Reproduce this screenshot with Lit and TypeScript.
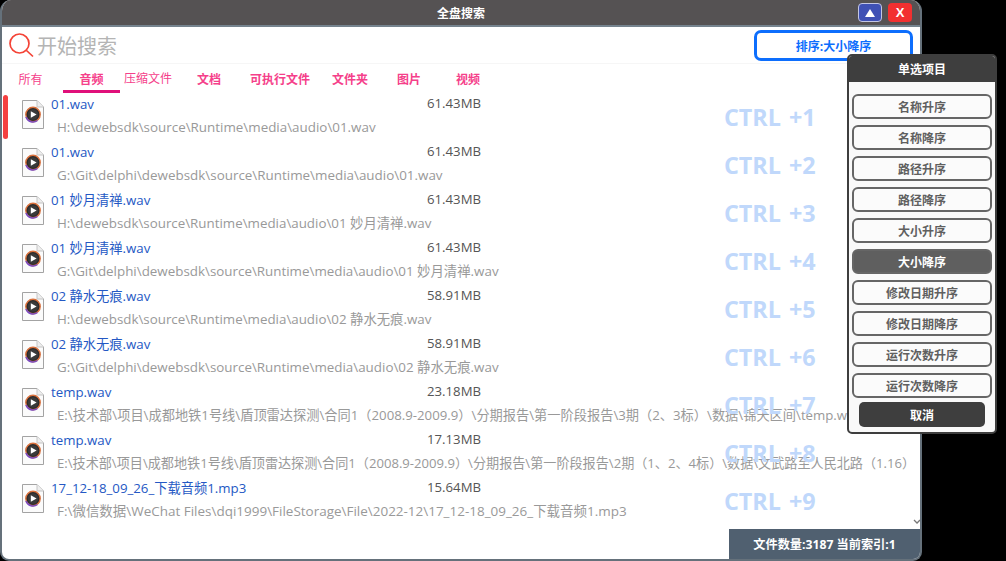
import { LitElement, html, css, svg } from "lit";
import { customElement } from "lit/decorators.js";

const rows: [string, string, string, number][] = [
  ["01.wav", "61.43MB", "H:\\dewebsdk\\source\\Runtime\\media\\audio\\01.wav", 13.4],
  ["01.wav", "61.43MB", "G:\\Git\\delphi\\dewebsdk\\source\\Runtime\\media\\audio\\01.wav", 13.42],
  ["01 妙月清禅.wav", "61.43MB", "H:\\dewebsdk\\source\\Runtime\\media\\audio\\01 妙月清禅.wav", 13.35],
  ["01 妙月清禅.wav", "61.43MB", "G:\\Git\\delphi\\dewebsdk\\source\\Runtime\\media\\audio\\01 妙月清禅.wav", 13.38],
  ["02 静水无痕.wav", "58.91MB", "H:\\dewebsdk\\source\\Runtime\\media\\audio\\02 静水无痕.wav", 13.35],
  ["02 静水无痕.wav", "58.91MB", "G:\\Git\\delphi\\dewebsdk\\source\\Runtime\\media\\audio\\02 静水无痕.wav", 13.38],
  ["temp.wav", "23.18MB", "E:\\技术部\\项目\\成都地铁1号线\\盾顶雷达探测\\合同1（2008.9-2009.9）\\分期报告\\第一阶段报告\\3期（2、3标）\\数据\\锦天区间\\temp.wav", 13.22],
  ["temp.wav", "17.13MB", "E:\\技术部\\项目\\成都地铁1号线\\盾顶雷达探测\\合同1（2008.9-2009.9）\\分期报告\\第一阶段报告\\2期（1、2、4标）\\数据\\文武路至人民北路（1.16）", 13.12],
  ["17_12-18_09_26_下载音频1.mp3", "15.64MB", "F:\\微信数据\\WeChat Files\\dqi1999\\FileStorage\\File\\2022-12\\17_12-18_09_26_下载音频1.mp3", 13.47],
];
const tabs: [string, number, string][] = [
  ["所有", 57, "thin first"], ["音频", 57, "on"], ["压缩文件", 56, "thin lift"], ["文档", 66, ""],
  ["可执行文件", 76, ""], ["文件夹", 64, ""], ["图片", 54, ""], ["视频", 64, ""],
];
const opts = ["名称升序", "名称降序", "路径升序", "路径降序", "大小升序", "大小降序", "修改日期升序", "修改日期降序", "运行次数升序", "运行次数降序"];

const fileIcon = svg`<svg class="ficon" width="22" height="29" viewBox="0 0 22 29">
  <path d="M.5.5H15L21.5 7V28.5H.5Z" fill="#fbfbfb" stroke="#a3a3a3"/>
  <path d="M15 .5V7H21.5" fill="#eee" stroke="#c4c4c4"/>
  <circle cx="11" cy="14.5" r="7.2" fill="#2b2b2b" stroke="#d9703c" stroke-width="1.4"/>
  <path d="M4 17A7.4 7.4 0 0 0 15.5 20.5" fill="none" stroke="#7a4bc0" stroke-width="1.5"/>
  <circle cx="11" cy="14.5" r="5.2" fill="#3a3a3a"/>
  <path d="M8.8 11.2 14.6 14.5 8.8 17.8Z" fill="#fff"/>
</svg>`;

@customElement("app-root")
export class AppRoot extends LitElement {
  static styles = css`
    :host { display: block; width: 1006px; height: 561px; background: #000; overflow: hidden; position: relative;
      font-family: "Open Sans", "Noto Sans CJK SC", sans-serif; }
    .win { width: 922px; height: 561px; box-sizing: border-box; background: #fff; border-radius: 11px 11px 9px 9px;
      overflow: hidden; display: flex; flex-direction: column; border: solid #65717b; border-width: 0 2px 2px 2px; }
    .title { height: 25px; margin: 0 -2px; flex: none; background: #555253; border-bottom: 2px solid #75838e; box-sizing: content-box;
      display: flex; align-items: center; justify-content: center; position: relative; color: #fff; font-size: 12px; font-weight: 700; }
    .wbtns { position: absolute; right: 10px; top: 3px; display: flex; gap: 6px; }
    .wb { width: 24px; height: 19px; border-radius: 4px; box-sizing: border-box; display: flex; align-items: center; justify-content: center; }
    .btn-up { background: #3f51b5; border: 1px solid #c3c6e4; }
    .btn-up i { width: 0; height: 0; border: solid transparent; border-width: 0 5.5px 8px; border-bottom-color: #fff; }
    .btn-x { background: #f23030; color: #fff; font: 700 13px "Liberation Sans", sans-serif; }
    .search { height: 36px; flex: none; border-bottom: 1px solid #f6f6f6; display: flex; align-items: center; padding-left: 6px; position: relative; }
    .ph { font-size: 20px; color: #b4b4b4; margin-left: 3px; padding-top: 2px; line-height: 30px; font-family: "Noto Sans CJK SC", sans-serif; }
    .sort { position: absolute; left: 752px; top: 3px; width: 159px; height: 31px; box-sizing: border-box; border: 3px solid #0d6efd; border-radius: 7px;
      color: #0d6efd; font-size: 12px; font-weight: 700; display: flex; align-items: center; justify-content: center; background: #fff; }
    .tabs { display: flex; height: 29px; flex: none; }
    .tab { box-sizing: border-box; text-align: center; color: #f5408a; font-size: 12px; font-weight: 700; line-height: 31px; height: 29px; }
    .tab.thin { font-weight: 400; }
    .tab.first { margin-right: 4px; }
    .tab.lift { line-height: 29px; }
    .tab.on { border-bottom: 3px solid #e0107a; }
    .list { position: relative; flex: 1; overflow: hidden; padding-top: 1px; }
    .bar { position: absolute; left: 1px; top: 2px; width: 5px; height: 44px; background: #f44040; border-radius: 3px; }
    .row { height: 48px; position: relative; display: grid; grid-template-columns: 20px 29px 376px auto; grid-template-rows: 22px 26px; }
    .ficon { grid-row: 1 / 3; grid-column: 2; margin-top: 6px; }
    .name { grid-column: 3; grid-row: 1; color: #2458c4; font-size: 13.25px; line-height: 20px; white-space: nowrap; }
    .size { grid-column: 4; grid-row: 1; color: #555; font-size: 13.2px; line-height: 18px; }
    .path { grid-column: 3 / 6; grid-row: 2; color: #999; line-height: 22px; margin-left: 6px; white-space: nowrap; width: 860px; }
    .ctrl { position: absolute; left: 722px; color: #c0d8fb; font: 700 23.3px "Open Sans", sans-serif; line-height: 32px; white-space: nowrap; word-spacing: 2px; }
    .chev { position: absolute; right: -2px; top: 425px; }
    .status { position: absolute; right: 0; bottom: 0; width: 191px; height: 30px; background: #506070; color: #fff; font-size: 12.2px; font-weight: 700;
      display: flex; align-items: center; justify-content: center; }
    .pop { position: absolute; left: 847px; top: 54px; width: 150px; height: 380px; box-sizing: border-box; background: #f9f9f9; border: 2px solid #3e3e3e; border-radius: 5px;
      display: flex; flex-direction: column; align-items: center; overflow: hidden; }
    .pt { align-self: stretch; height: 26px; background: #3e3e3e; color: #fff; font-size: 12px; font-weight: 700; display: flex; align-items: center; justify-content: center; flex: none; }
    .opts { display: flex; flex-direction: column; gap: 6px; margin-top: 12px; align-self: stretch; padding: 0 3px; }
    .o { height: 25px; box-sizing: border-box; border: 2px solid #666; border-radius: 6px; color: #606060; font-size: 12px; font-weight: 700;
      display: flex; align-items: center; justify-content: center; background: #fbfbfb; }
    .o.sel { background: #5f5f5f; color: #fff; }
    .cancel { width: 126px; height: 25px; margin-top: 4px; border-radius: 5px; background: #3e3e3e; color: #fff; font-size: 12px; font-weight: 700;
      display: flex; align-items: center; justify-content: center; }
  `;

  render() {
    return html`
      <div class="win">
        <div class="title">全盘搜索
          <div class="wbtns"><div class="wb btn-up"><i></i></div><div class="wb btn-x">X</div></div>
        </div>
        <div class="search">
          <svg width="26" height="26" viewBox="0 0 26 26"><circle cx="11.5" cy="11.5" r="9.5" fill="none" stroke="#f44336" stroke-width="1.7"/><path d="M18.5 18.5 25 24.5" stroke="#f44336" stroke-width="1.7"/></svg>
          <span class="ph">开始搜索</span>
          <div class="sort">排序:大小降序</div>
        </div>
        <div class="tabs">
          ${tabs.map(([t, w, c]) => html`<div class="tab ${c}" style="width:${w}px">${t}</div>`)}
        </div>
        <div class="list">
          <div class="bar"></div>
          ${rows.map((r) => html`<div class="row"><span></span>${fileIcon}<div class="name">${r[0]}</div><div class="size">${r[1]}</div><div class="path" style="font-size:${r[3]}px">${r[2]}</div></div>`)}
          ${[1,2,3,4,5,6,7,8,9].map((n, i) => html`<div class="ctrl" style="top:${8 + i * 48}px">CTRL +${n}</div>`)}
          <svg class="chev" width="10" height="8" viewBox="0 0 10 8"><path d="M2 2 5 5 8 2" fill="none" stroke="#777" stroke-width="1.3"/></svg>
          <div class="status">文件数量:3187 当前索引:1</div>
        </div>
      </div>
      <div class="pop">
        <div class="pt">单选项目</div>
        <div class="opts">${opts.map((o) => html`<div class="o ${o === "大小降序" ? "sel" : ""}">${o}</div>`)}</div>
        <div class="cancel">取消</div>
      </div>`;
  }
}
